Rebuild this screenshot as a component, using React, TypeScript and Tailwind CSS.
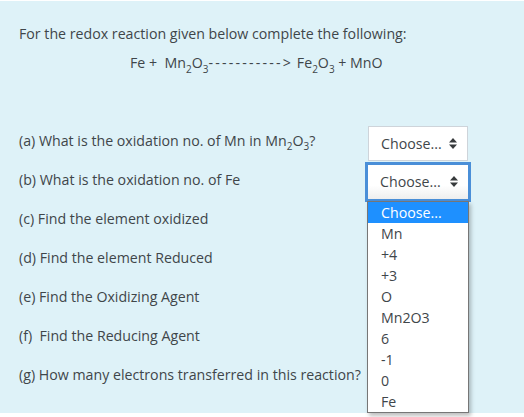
import React from 'react';

function Sub({ children }: { children: React.ReactNode }) {
  return <sub className="text-[10px] leading-none align-[-2px]">{children}</sub>;
}

const questions = [
  { key: 'a', label: <>(a) What is the oxidation no. of Mn in Mn<Sub>2</Sub>O<Sub>3</Sub>?</> },
  { key: 'b', label: <>(b) What is the oxidation no. of Fe</> },
  { key: 'c', label: <>(c) Find the element oxidized</> },
  { key: 'd', label: <>(d) Find the element Reduced</> },
  { key: 'e', label: <>(e) Find the Oxidizing Agent</> },
  { key: 'f', label: <>(f)&nbsp; Find the Reducing Agent</> },
  { key: 'g', label: <>(g) How many electrons transferred in this reaction?</> },
];

const options = ['Mn', '+4', '+3', 'O', 'Mn2O3', '6', '-1', '0', 'Fe'];

function Arrows() {
  return (
    <svg width="8" height="11" viewBox="0 0 8 11" className="text-[#373a3c]">
      <path d="M4 0 L8 4.5 L0 4.5 Z" fill="currentColor" />
      <path d="M0 6.5 L8 6.5 L4 11 Z" fill="currentColor" />
    </svg>
  );
}

export default function App() {
  return (
    <div className="w-[524px] h-[417px] bg-white pt-px font-['Open_Sans',sans-serif] text-[14.2px] text-[#3f464a]">
      <div className="relative h-[412px] bg-[#def2f8] pl-[19px]">
        <p className="pt-[23px] leading-5">For the redox reaction given below complete the following:</p>
        <p className="mt-[9px] pl-[111px] leading-5">
          Fe +&nbsp; Mn<Sub>2</Sub>O<Sub>3</Sub><span className="tracking-[2.2px]">-----------&gt;</span> Fe<Sub>2</Sub>O<Sub>3</Sub> + MnO
        </p>

        <div className="mt-[48px] flex flex-col">
          {questions.map((q) => (
            <div key={q.key} className="flex h-[39px] items-center leading-5">
              <span className="w-[349px] whitespace-nowrap">{q.label}</span>
              {q.key === 'a' && (
                <div className="mt-[6px] flex h-[35px] w-[100px] items-center justify-between border border-[#ced4da] bg-white pl-[12px] pr-[10px]">
                  <span>Choose...</span>
                  <Arrows />
                </div>
              )}
              {q.key === 'b' && (
                <div className="-ml-[3px] mt-[4px] h-[40px] w-[106px] border-[3px] border-[#4a8fd8] bg-white">
                  <div className="flex h-full items-center justify-between bg-gradient-to-b from-white from-60% to-[#eeeeee] pl-[12px] pr-[10px]">
                    <span>Choose...</span>
                    <Arrows />
                  </div>
                </div>
              )}
            </div>
          ))}
        </div>

        <div className="absolute left-[367px] top-[200px] w-[102px] border border-[#767676] bg-white leading-[21px] shadow-[2px_3px_4px_rgba(0,0,0,0.25)]">
          <div className="bg-[#1e90ff] pl-[13px] text-white">Choose...</div>
          {options.map((o) => (
            <div key={o} className="pl-[13px]">{o}</div>
          ))}
        </div>
      </div>
    </div>
  );
}
